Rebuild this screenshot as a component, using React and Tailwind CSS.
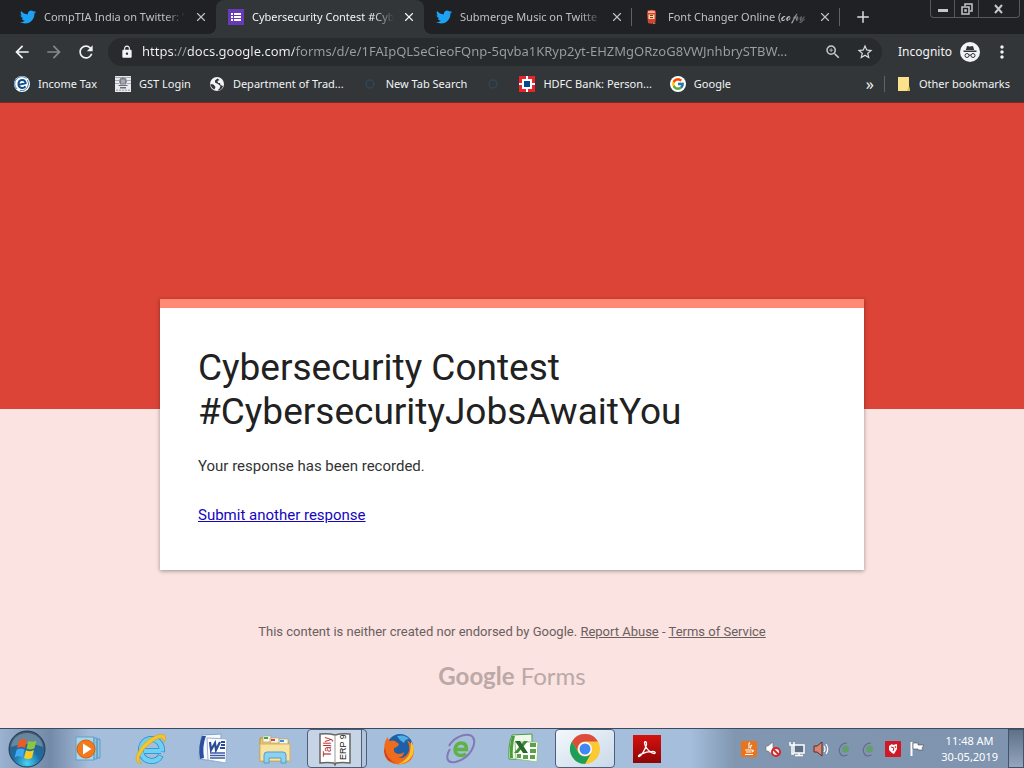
import { Plus, X } from "lucide-react"
import { FaTwitter } from "react-icons/fa"
import { FcGoogle } from "react-icons/fc"
import { MdArrowBack, MdArrowForward, MdRefresh, MdLock, MdStarBorder, MdMoreVert, MdZoomIn } from "react-icons/md"
import clsx from "clsx"

const ADDRESS =
    "https://docs.google.com/forms/d/e/1FAIpQLSeCieoFQnp-5qvba1KRyp2yt-EHZMgORzoG8VWJnhbrySTBW..."

/* ---------- favicons ---------- */

const Twitter = () => <FaTwitter size={16} className="text-[#1da1f2]" />

const FormsIcon = () => (
    <svg width="16" height="16" viewBox="0 0 16 16">
        <rect width="16" height="16" fill="#673ab7" />
        <path d="M3 4h2v2H3zM6 4h7v2H6zM3 7h2v2H3zM6 7h7v2H6zM3 10h2v2H3zM6 10h7v2H6z" fill="#fff" />
    </svg>
)

const CanIcon = () => (
    <svg width="16" height="16" viewBox="0 0 16 16">
        <path d="M3.500 1.500q4-1.500 8 0l.5 3-.5 9q-4 2-7.500.5L3 5z" fill="#d8432f" />
        <path d="M4 2.200q3.500-1 7 0V4H4z" fill="#efb49c" />
        <path d="M4.500 5.500h6V10h-6z" fill="#f4d9a8" />
        <path d="M6 6.500h3M6 8.500h3" stroke="#7c3a25" />
        <path d="M9 13.500l3 1-3 .8z" fill="#a98a7c" />
    </svg>
)

const IncomeTaxIcon = () => (
    <svg width="16" height="16" viewBox="0 0 16 16">
        <circle cx="8" cy="8" r="8" fill="#fff" />
        <path d="M3 13A7 7 0 0 1 12.500 2.500" fill="none" stroke="#3f83bd" />
        <path d="M13.500 4A7 7 0 0 1 6 14.500" fill="none" stroke="#3f83bd" />
        <path d="M4.600 8.900L11.600 7.200C11.200 4.600 9.600 3.900 8 4 5.600 4.200 4.400 6.200 4.500 8.400 4.600 10.700 6.300 12.100 8.200 12 9.800 11.900 10.700 11.300 11.500 10.300" fill="none" stroke="#124e8c" strokeWidth="2" />
    </svg>
)

const GstIcon = () => (
    <svg width="16" height="16" viewBox="0 0 16 16">
        <rect width="16" height="16" fill="#e9eaee" />
        <path d="M0 1.500h16M0 4.500h4M12 4.500h4M0 7.500h4M12 7.500h4" stroke="#a6a8b3" />
        <path d="M5 2.500q3-2 6 0l1 2.500-1 3.500H5L4 5z" fill="#7b7d89" />
        <path d="M6.500 3.500h1v4h-1zM8.500 3.500h1v4h-1z" fill="#d5d6dc" />
        <path d="M3.500 9h9v1h-9zM5 11h6v1.500H5z" fill="#696b77" />
        <path d="M1 14.200h14" stroke="#8f919c" strokeDasharray="2 1" />
    </svg>
)

const GlobeIcon = () => (
    <svg width="16" height="16" viewBox="0 0 16 16">
        <circle cx="8" cy="8" r="7" fill="#f1f3f4" />
        <path d="M8.500 2.500L6 4.500v2L9 8l2.500 2-1 2.500-2 2c2.500 0 5-2 5.500-4.500l-2.500-1L11 7H9L8.500 5l2-1z" fill="#323639" />
        <path d="M1.500 8l3 .5 2 2.500-1 2.500C3 12.500 1.500 10.500 1.500 8z" fill="#323639" />
    </svg>
)

const RingIcon = () => (
    <svg width="16" height="16" viewBox="0 0 16 16">
        <circle cx="8" cy="8" r="4" fill="none" stroke="#2f4856" strokeWidth="1.500" />
    </svg>
)

const HdfcIcon = () => (
    <svg width="16" height="16" viewBox="0 0 16 16">
        <rect width="16" height="16" fill="#ed232a" />
        <path d="M7 0h2v3h4v4h3v2h-3v4H9v3H7v-3H3V9H0V7h3V3h4z" fill="#fff" />
        <rect x="5" y="5" width="6" height="6" fill="#004c8f" />
    </svg>
)

const GoogleIcon = () => (
    <span className="flex size-4 items-center justify-center rounded-full bg-white">
        <FcGoogle size={14} />
    </span>
)

const FolderIcon = () => (
    <svg width="14" height="16" viewBox="0 0 14 16">
        <path d="M1 1h11v9l1 5H1z" fill="#fbe28a" />
        <path d="M10 15l2-5 1 5z" fill="#e0bd4e" />
    </svg>
)

const IncognitoIcon = () => (
    <svg width="20" height="20" viewBox="0 0 20 20">
        <circle cx="10" cy="10" r="10" fill="#f1f3f4" />
        <path d="M7 4l3 .6L13 4l1.200 4H5.800zM3.500 8.500h13V10h-13z" fill="#323639" />
        <circle cx="7" cy="13.500" r="2" fill="none" stroke="#323639" />
        <circle cx="13" cy="13.500" r="2" fill="none" stroke="#323639" />
        <path d="M9 13.300q1-.7 2 0" fill="none" stroke="#323639" />
    </svg>
)

/* ---------- taskbar icons ---------- */

const StartOrb = () => (
    <svg width="38" height="38" viewBox="0 0 38 38">
        <defs>
            <radialGradient id="orb" cx="50%" cy="90%" r="85%">
                <stop offset="0" stopColor="#45d5f5" />
                <stop offset=".45" stopColor="#1b6ea5" />
                <stop offset="1" stopColor="#3c5973" />
            </radialGradient>
        </defs>
        <circle cx="19" cy="19" r="18" fill="url(#orb)" stroke="#27394d" />
        <path d="M3 17C4 8 11 3 19 3s15 5 16 14c-9-4-22-4-32 0z" fill="#fff" opacity=".25" />
        <path d="M11 10.500q4-2.500 8-.5l-2 8q-4-2-8 .3z" fill="#ee5a24" />
        <path d="M20.500 10.800q4 2 8-.3l-2 7.700q-4 2.300-8 .3z" fill="#8cc63f" />
        <path d="M8.600 19.800q4-2.300 8-.3l-2 7.700q-4-2-8 .3z" fill="#3fa9f5" />
        <path d="M18 20.200q4 2 8-.3l-2 7.800q-4 2.300-8 .2z" fill="#fcc91f" />
    </svg>
)

const MediaPlayer = () => (
    <svg width="28" height="26" viewBox="0 0 28 26">
        <path d="M1 1h18v23H1z" fill="#a9d6ec" stroke="#5f9fc4" />
        <path d="M19 2h3v21h-3zM22 3h3v19h-3z" fill="#8ec3e0" stroke="#4f8fb8" strokeWidth=".7" />
        <circle cx="11" cy="13" r="9" fill="#f07a1c" stroke="#d45f0c" />
        <path d="M8 7.500v11l8.500-5.500z" fill="#fff" />
    </svg>
)

const InternetExplorer = () => (
    <svg width="34" height="34" viewBox="0 0 34 34">
        <path d="M10 19h17M28 20c.5-8-4.500-13-10.500-13S7 11.500 7 18s4.500 11 10.500 11c4.500 0 7.500-2 9.200-5.500" fill="none" stroke="#2789c4" strokeWidth="6" />
        <path d="M10 19h17M28 19.500c.5-7.500-4.500-12.500-10.500-12.500S7 11.500 7 18s4.500 11 10.500 11c4.500 0 7.500-2 9-5" fill="none" stroke="#6fd0f5" strokeWidth="4.500" />
        <path d="M3 30C-.5 24 8 10 20 4.500 26 1.500 31 1.500 31.500 5c.3 2-.5 4-1.500 5.500 0-3-1-5-5-4C17 9 6 20 5 27c-.2 2 .5 3.500 3 3.500-2 1.200-4 1-5-.5z" fill="#f4c52c" stroke="#cf9a13" strokeWidth=".5" />
    </svg>
)

const Word = () => (
    <svg width="32" height="32" viewBox="0 0 32 32">
        <path d="M5 2l19-1v28L2 26q0-14 3-24z" fill="#f4f7fc" stroke="#8aa0c8" />
        <path d="M5 3h4Q5 13 7 25l-4 1Q1 13 5 3z" fill="#2b4f9f" />
        <path d="M10 5l20 1-1 24-18-3z" fill="#fff" stroke="#9aaed2" />
        <path d="M13 9l1 8 4-7 1 7 4-8" fill="none" stroke="#2a4c9b" strokeWidth="2.200" />
        <path d="M24 9h4M24 12h4M23 15h5" stroke="#2a4c9b" strokeWidth="1.800" />
        <path d="M13 20h15M13 22.500h15M13 25h15" stroke="#3d5ba3" strokeWidth="1.300" />
    </svg>
)

const Explorer = () => (
    <svg width="34" height="32" viewBox="0 0 34 32">
        <path d="M2 5h9l2 3h17v20H2z" fill="#e7c766" stroke="#b99237" />
        <path d="M5 3h8v6H5zM12 5h9v5h-9zM21 6h9v5h-9z" fill="#f6f6ee" stroke="#b9a35e" strokeWidth=".6" />
        <path d="M6 4h4v2H6z" fill="#3aa655" />
        <path d="M13 6h4v2h-4z" fill="#d94b3a" />
        <path d="M22 7h4v2h-4z" fill="#3c8ed6" />
        <path d="M2 11h30v17H2z" fill="#f8e3a0" stroke="#d4b25a" />
        <path d="M6 30V22q0-3 3-3h16q3 0 3 3v8h-5v-5H11v5z" fill="#8fd0ef" stroke="#4e9fc9" />
    </svg>
)

const Tally = () => (
    <svg width="34" height="34" viewBox="0 0 34 34">
        <path d="M2 2q8-1 15 1 7-2 15-1v29q-8-1-14 0l-1 2-1-2q-6-1-14 0z" fill="#fff" stroke="#666" strokeWidth="1.500" />
        <path d="M17 3v28" stroke="#999" />
        <text transform="rotate(-90)" x="-25" y="13" fontSize="10" fill="#b01818" fontFamily="Liberation Sans, sans-serif">Tally</text>
        <text transform="rotate(-90)" x="-28" y="28" fontSize="9" fill="#111" fontFamily="Liberation Sans, sans-serif">ERP 9</text>
    </svg>
)

const Firefox = () => (
    <svg width="32" height="32" viewBox="0 0 32 32">
        <circle cx="17" cy="14" r="13" fill="#1f5fa8" />
        <path d="M14 3q8-2 12 3-4 0-5 4-5-3-7-7z" fill="#4fb0e6" />
        <path d="M2 9q1-3 3-5 0 3 2 4 3-1 5 0l4 3q-1 3-5 4-1 5 4 6 4 0 6-2 0 5-6 6 8 1 11-7 1-6-2-11 6 4 7 11-1 13-15 13.500Q2 31 1 18q0-5 1-9z" fill="#ee6c1c" />
        <path d="M28 8q5 8 1 15-5 8-14 8 10-4 12-12 1-6 1-11z" fill="#fcc428" />
        <path d="M2 15q1 11 11 15Q2 29 1 18z" fill="#d3401a" />
    </svg>
)

const ESign = () => (
    <svg width="32" height="32" viewBox="0 0 32 32">
        <path d="M4 13C8 5 19 0 26 2.500 32 6 29 16 22 23 15 29 5 32 2.500 26 1.500 22 3 19 5 16" fill="none" stroke="#8478b6" strokeWidth="2" />
        <path d="M11 16.500h10.500c0-4.500-2.300-6.500-5.300-6.500-3.600 0-6.200 3-6.200 6.500 0 4 2.600 6 6.200 6 2 0 3.600-.6 4.600-1.800" fill="none" stroke="#60b246" strokeWidth="3.500" />
    </svg>
)

const Excel = () => (
    <svg width="32" height="32" viewBox="0 0 32 32">
        <path d="M5 2l20-1v26L2 26Q1 12 5 2z" fill="#eef7e8" stroke="#4b9a3c" />
        <path d="M5 3h3Q5 14 6 25H3Q2 13 5 3z" fill="#4d9c3c" />
        <path d="M8 9h23l-1 20-21-3z" fill="#fff" stroke="#9ac48c" />
        <path d="M23 10h6v4h-6zM23 16h6v4h-6zM23 22h5v4h-5zM16 22h5v4h-5zM10 21h4v4h-4z" fill="#5aa14a" />
        <path d="M21 8h-4L7 20h4z" fill="#3f8d38" />
        <path d="M8 8h5l8 12h-5z" fill="#26692a" />
    </svg>
)

const Chrome = () => (
    <svg width="30" height="30" viewBox="0 0 30 30">
        <circle cx="15" cy="15" r="15" fill="#fbc934" />
        <path d="M2 7.500A15 15 0 0 1 28 7.500H15a7.500 7.500 0 0 0-6.500 11.250z" fill="#dd4b3e" />
        <path d="M2 7.500l6.500 11.250A7.500 7.500 0 0 0 21.500 18.750L15 30A15 15 0 0 1 2 7.500z" fill="#1b9f5b" />
        <circle cx="15" cy="15" r="7" fill="#fff" />
        <circle cx="15" cy="15" r="5.500" fill="#4386f5" />
    </svg>
)

const Acrobat = () => (
    <svg width="28" height="28" viewBox="0 0 28 28">
        <defs>
            <linearGradient id="pdf" x1="0" y1="0" x2="0" y2="1">
                <stop offset="0" stopColor="#d4120f" />
                <stop offset="1" stopColor="#8e0506" />
            </linearGradient>
        </defs>
        <rect width="28" height="28" fill="url(#pdf)" />
        <path d="M6 21.500c2-.5 6-6 7.500-12 .4-3-2-4-2-1.500C11.500 12 17 18 21 18.500c2 0 1.500-2.200-1-2.200-4 0-9 1.200-12.500 3-2 1-2.500 2.500-1.500 2.200z" fill="none" stroke="#fff" strokeWidth="1.300" />
    </svg>
)

/* ---------- tray icons ---------- */

const JavaTray = () => (
    <svg width="16" height="16" viewBox="0 0 16 16">
        <rect width="16" height="16" rx="1" fill="#e8741e" />
        <path d="M9 1.500c-3.500 2.500 1 3-1.500 6M11 4C8.500 5.500 10 6.500 9.500 7.500M4 9h7M5 11h5.500M4 13.500h8M11 9q3 .5 0 2" fill="none" stroke="#fff" strokeWidth="1.100" />
    </svg>
)

const MutedTray = () => (
    <svg width="16" height="16" viewBox="0 0 16 16">
        <path d="M1 5h2l5-4v13l-5-4H1z" fill="#fff" stroke="#666" strokeWidth=".6" />
        <circle cx="11" cy="11" r="4" fill="#fff" stroke="#d3282b" strokeWidth="2" />
        <path d="M8.500 8.500l5 5" stroke="#d3282b" strokeWidth="2" />
    </svg>
)

const NetworkTray = () => (
    <svg width="16" height="16" viewBox="0 0 16 16">
        <path d="M5 4h10v8H5z" fill="#5f7086" stroke="#fff" strokeWidth="1.500" />
        <path d="M6 14.500h8M10 12v2" stroke="#fff" strokeWidth="1.500" />
        <path d="M1 1v3h4V1M3 4v9h2" fill="none" stroke="#fff" strokeWidth="1.500" />
    </svg>
)

const SpeakerTray = () => (
    <svg width="16" height="16" viewBox="0 0 16 16">
        <path d="M1 5h3l5-4v14l-5-4H1z" fill="#d98371" stroke="#5d2d26" />
        <path d="M11 5q2 3 0 6M13 3q3.500 5 0 10" fill="none" stroke="#fff" strokeWidth="1.200" />
    </svg>
)

const OrbitTray = () => (
    <svg width="16" height="16" viewBox="0 0 16 16">
        <path d="M10 2C4 2 1.500 7 2.500 11s4 4.500 8 3" fill="none" stroke="#6b6699" strokeWidth="1.200" />
        <circle cx="8.500" cy="8" r="3.500" fill="#629f6a" />
    </svg>
)

const ShieldTray = () => (
    <svg width="16" height="16" viewBox="0 0 16 16">
        <rect width="16" height="16" rx="1" fill="#d01826" />
        <path d="M4 5l3-2 1 1 4-1v5l-3 5-2-1-3-3z" fill="#fff" />
        <path d="M6 6l3 1-1 3M10 5l1 2" fill="none" stroke="#d01826" />
    </svg>
)

const FlagTray = () => (
    <svg width="16" height="16" viewBox="0 0 16 16">
        <path d="M2.500 1v14" stroke="#fff" strokeWidth="2" />
        <path d="M4 2h5v2h6l-2 3 1 2H9V8H4z" fill="#fff" stroke="#444c58" strokeWidth=".6" />
    </svg>
)

/* ---------- browser ---------- */

const tabs = [
    { icon: Twitter, title: "CompTIA India on Twitter: '" },
    { icon: FormsIcon, title: "Cybersecurity Contest #Cyb", active: true },
    { icon: Twitter, title: "Submerge Music on Twitte" },
    { icon: CanIcon, title: "Font Changer Online (𝓬𝓸𝓹𝔂" },
]

const bookmarks = [
    { icon: IncomeTaxIcon, label: "Income Tax" },
    { icon: GstIcon, label: "GST Login" },
    { icon: GlobeIcon, label: "Department of Trad..." },
    { icon: RingIcon, label: "New Tab Search" },
    { icon: RingIcon, label: "" },
    { icon: HdfcIcon, label: "HDFC Bank: Person..." },
    { icon: GoogleIcon, label: "Google" },
]

function Tab({ icon: Icon, title, active, divider }) {
    return (
        <div
            className={clsx(
                "flex h-full w-[208px] min-w-0 items-center gap-2 pl-3 pr-2 text-[11px]",
                active ? "relative rounded-t-lg bg-[#323639] text-[#f1f3f4]" : "text-[#bdc1c6]",
                active && "before:absolute before:bottom-0 before:-left-2 before:size-2 before:bg-[radial-gradient(circle_at_0_0,transparent_8px,#323639_8px)]",
                active && "after:absolute after:-right-2 after:bottom-0 after:size-2 after:bg-[radial-gradient(circle_at_100%_0,transparent_8px,#323639_8px)]",
                divider && "bg-[linear-gradient(#5f6368,#5f6368)] bg-[length:1px_18px] bg-right bg-no-repeat"
            )}
        >
            <span className="shrink-0"><Icon /></span>
            <span className="min-w-0 flex-1 overflow-hidden whitespace-nowrap mask-r-from-85%">{title}</span>
            <button type="button" aria-label="Close tab" className="shrink-0">
                <X size={14} />
            </button>
        </div>
    )
}

function TabStrip() {
    return (
        <div className="flex h-[34px] items-start bg-[#202124] pl-2">
            <div className="flex h-full min-w-0">
                {tabs.map((tab, i) => (
                    <Tab key={i} {...tab} divider={i > 1} />
                ))}
            </div>
            <button type="button" aria-label="New tab" className="ml-3.5 flex h-full items-center text-[#dadce0]">
                <Plus size={18} />
            </button>
            <div className="mr-1 ml-auto flex h-[18px] divide-x divide-[#55585c] rounded-b border border-t-0 border-[#55585c] text-[#c4c6c9]">
                <button type="button" aria-label="Minimize" className="flex w-6 items-center justify-center">
                    <svg width="12" height="10"><path d="M1 5h10v3H1z" fill="currentColor" /></svg>
                </button>
                <button type="button" aria-label="Restore" className="flex w-6 items-center justify-center">
                    <svg width="12" height="12" fill="none" stroke="currentColor" strokeWidth="1.500">
                        <path d="M4 3V1h7v7H9M1 4h7v7H1zM4 7h1v1H4z" />
                    </svg>
                </button>
                <button type="button" aria-label="Close" className="flex w-10 items-center justify-center">
                    <svg width="12" height="10" stroke="currentColor" strokeWidth="2"><path d="M2 1l7 8M9 1L2 9" /></svg>
                </button>
            </div>
        </div>
    )
}

function Toolbar() {
    return (
        <div className="flex h-9 items-center bg-[#323639] px-3 text-[#f1f3f4]">
            <div className="flex items-center gap-3">
                <button type="button" aria-label="Back"><MdArrowBack size={20} /></button>
                <button type="button" aria-label="Forward" className="text-[#85888b]"><MdArrowForward size={20} /></button>
                <button type="button" aria-label="Reload"><MdRefresh size={20} /></button>
            </div>
            <div className="ml-3 flex h-7 min-w-0 flex-1 items-center gap-2 rounded-full bg-[#282b2e] pr-2 pl-3">
                <MdLock size={14} className="shrink-0" />
                {/* scheme and host are lit, the rest of the address is dimmed */}
                <input
                    type="text"
                    aria-label="Address"
                    defaultValue={ADDRESS}
                    className="min-w-0 flex-1 bg-[linear-gradient(90deg,#f1f3f4_32px,#9aa0a6_32px,#9aa0a6_46px,#f1f3f4_46px,#f1f3f4_152px,#9aa0a6_152px)] bg-clip-text text-[13px] text-transparent outline-none"
                />
                <button type="button" aria-label="Zoom" className="text-[#c8cbce]"><MdZoomIn size={18} /></button>
                <button type="button" aria-label="Bookmark this page" className="ml-1.5 text-[#dadce0]"><MdStarBorder size={18} /></button>
            </div>
            <span className="ml-4 text-xs">Incognito</span>
            <span className="ml-2"><IncognitoIcon /></span>
            <button type="button" aria-label="Menu" className="ml-3"><MdMoreVert size={20} /></button>
        </div>
    )
}

function BookmarksBar() {
    return (
        <nav className="flex h-[33px] items-center gap-[18px] border-b border-[#7a2b26] bg-[#323639] px-3.5 pb-1 text-[11px] whitespace-nowrap text-[#f1f3f4]">
            {bookmarks.map(({ icon: Icon, label }, i) => (
                <a key={i} href="#" aria-label={label || "Bookmark"} className="flex items-center gap-2">
                    <Icon />
                    {label}
                </a>
            ))}
            <button type="button" aria-label="More bookmarks" className="ml-auto -mr-2 text-base">»</button>
            <a href="#" className="flex h-4 items-center gap-2 border-l border-[#5f6368] pl-3">
                <FolderIcon />
                Other bookmarks
            </a>
        </nav>
    )
}

function FormPage() {
    return (
        <main className="flex-1 bg-[#fae3e1] font-[Roboto,sans-serif]">
            <div className="h-[306px] bg-[#db4437]" />
            <section className="mx-auto -mt-[110px] w-full max-w-[704px] border-t-[9px] border-[#ff8a73] bg-white px-[38px] pt-[38px] pb-[45px] shadow-[0_1px_4px_rgba(0,0,0,0.37)]">
                <h1 className="text-[37px] leading-[44px] text-[#212121]">
                    Cybersecurity Contest
                    <br />
                    #CybersecurityJobsAwaitYou
                </h1>
                <p className="mt-[22px] text-[15px] leading-5 text-[#333]">Your response has been recorded.</p>
                <p className="mt-[29px] text-[15px] leading-5">
                    <a href="#" className="text-[#1505c0] underline">Submit another response</a>
                </p>
            </section>
            <footer className="mt-[52px] text-center text-[13px] leading-5 text-[#6b5e5e]">
                <p>
                    This content is neither created nor endorsed by Google.{" "}
                    <a href="#" className="underline">Report Abuse</a> - <a href="#" className="underline">Terms of Service</a>
                </p>
                <p className="mt-[18px] font-[Lato,sans-serif] text-2xl leading-8 text-[#bba8a7]">
                    <span className="font-bold">Google</span> Forms
                </p>
            </footer>
        </main>
    )
}

/* ---------- taskbar ---------- */

const apps = [
    { name: "Windows Media Player", icon: MediaPlayer },
    { name: "Internet Explorer", icon: InternetExplorer },
    { name: "Word", icon: Word },
    { name: "Windows Explorer", icon: Explorer },
    { name: "Tally", icon: Tally, open: "stacked" },
    { name: "Firefox", icon: Firefox },
    { name: "eSign", icon: ESign },
    { name: "Excel", icon: Excel },
    { name: "Chrome", icon: Chrome, open: "front" },
    { name: "Adobe Reader", icon: Acrobat },
]

const tray = [JavaTray, MutedTray, NetworkTray, SpeakerTray, OrbitTray, OrbitTray, ShieldTray, FlagTray]

function Taskbar() {
    return (
        <div className="flex h-10 items-center border-t border-[#3b4a5e] bg-[linear-gradient(90deg,#9bb3d1,#7389a8_50px,#a5bedc_90px,#a5bedc_690px,#8096b1_735px,#7f94ae)]">
            <button type="button" aria-label="Start" className="ml-2 shrink-0"><StartOrb /></button>
            <div className="ml-[13px] flex h-full gap-0.5">
                {apps.map(({ name, icon: Icon, open }) => (
                    <button
                        key={name}
                        type="button"
                        aria-label={name}
                        className={clsx(
                            "flex h-full w-[60px] items-center justify-center",
                            open && "rounded-sm border border-[#4d5f78]",
                            open === "stacked" && "bg-[linear-gradient(90deg,#c6d4e6_53px,#4d5f78_53px,#4d5f78_54px,#b2c4da_54px)] pr-1",
                            open === "front" && "bg-linear-to-br from-[#f4f8fc] to-[#c9d9ea]"
                        )}
                    >
                        <Icon />
                    </button>
                ))}
            </div>
            <div className="ml-auto flex gap-2">
                {tray.map((Icon, i) => <Icon key={i} />)}
            </div>
            <div className="ml-4 text-center text-[11px] leading-4 whitespace-nowrap text-white">
                <div>11:48 AM</div>
                <div>30-05,2019</div>
            </div>
            <button type="button" aria-label="Show desktop" className="ml-2.5 h-full w-4 border border-[#43536a] bg-linear-to-b from-[#5f7188] to-[#93a6bd]" />
        </div>
    )
}

export default function App() {
    return (
        <div className="flex min-h-screen flex-col font-['Noto_Sans','Open_Sans',sans-serif]">
            <header>
                <TabStrip />
                <Toolbar />
                <BookmarksBar />
            </header>
            <FormPage />
            <Taskbar />
        </div>
    )
}
